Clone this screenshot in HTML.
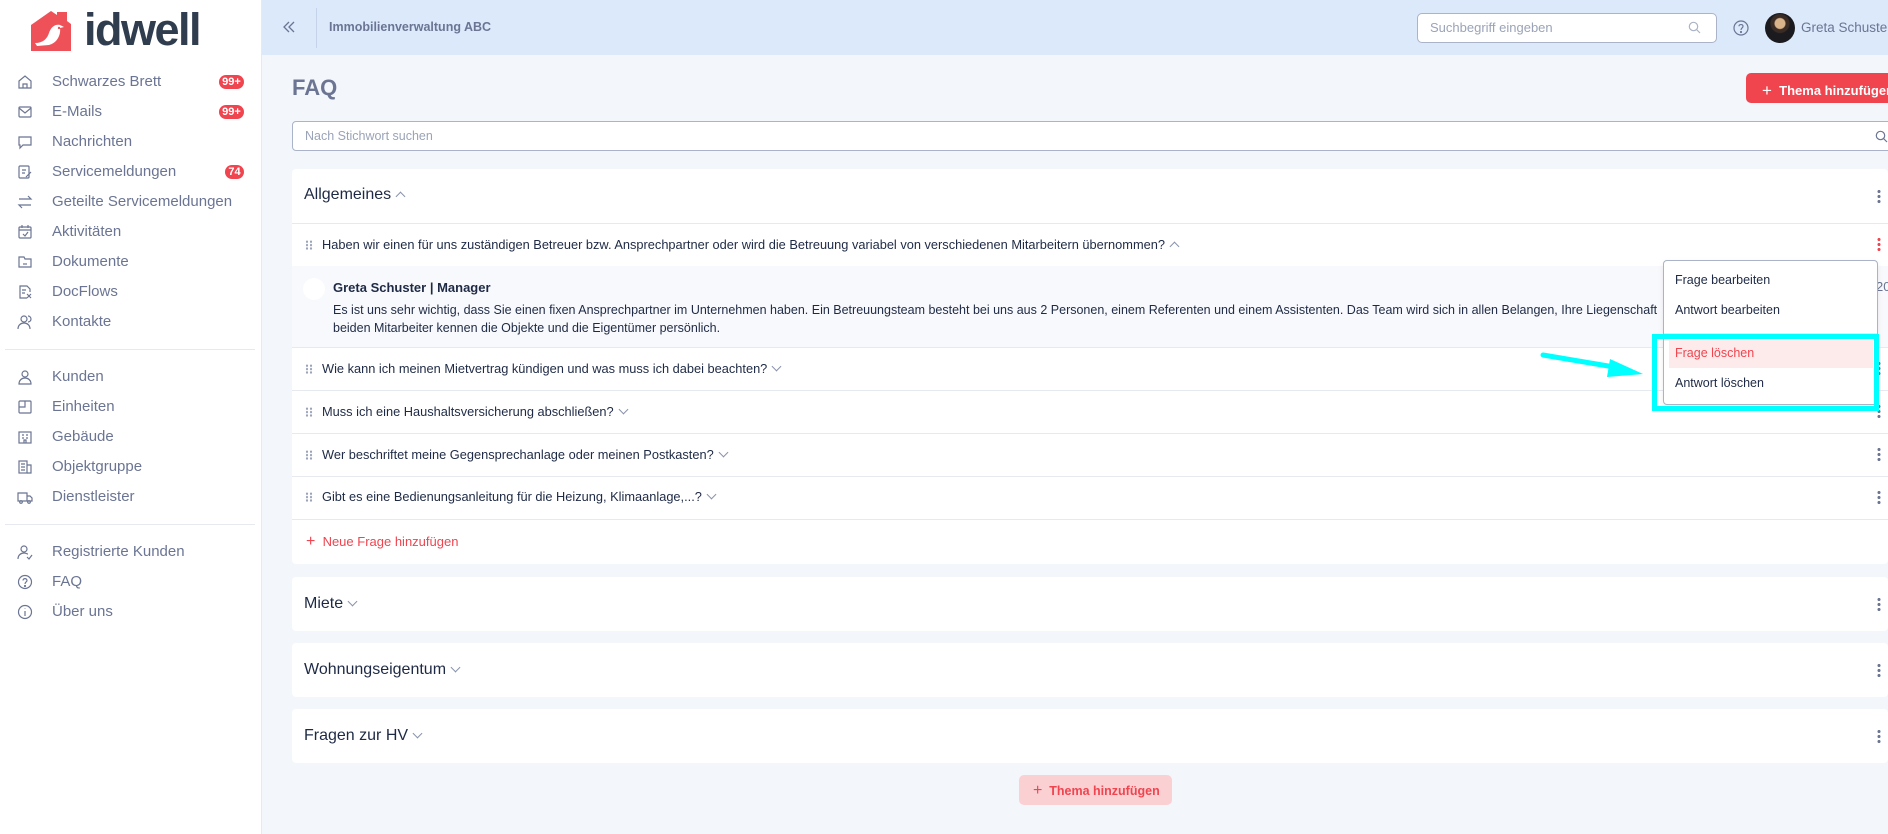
<!DOCTYPE html>
<html><head><meta charset="utf-8">
<style>
*{box-sizing:border-box;margin:0;padding:0}
body{width:1888px;height:834px;overflow:hidden;background:#f3f6fb;font-family:"Liberation Sans",sans-serif;position:relative;color:#1e2a45}
.abs{position:absolute}
#side{left:0;top:0;width:262px;height:834px;background:#fff;border-right:1px solid #e6e9f0}
.nav{position:absolute;left:52px;font-size:15px;color:#6b7593;white-space:nowrap}
.ic{position:absolute;left:17px;width:16px;height:16px}
.badge{position:absolute;background:#f0444f;color:#fff;font-size:11px;font-weight:bold;border-radius:8px;height:14px;line-height:14px;text-align:center}
#hdr{left:262px;top:0;width:1626px;height:55px;background:#dbe9fb}
.card{position:absolute;left:292px;width:1596px;background:#fff;border-radius:4px}
.q{position:absolute;left:322px;font-size:12.8px;color:#1e2a45;white-space:nowrap}
.grip{position:absolute;left:305px;width:8px;height:10px;background-image:radial-gradient(circle,#9aa3b8 1px,transparent 1.3px);background-size:4px 3.4px}
.hl{position:absolute;left:292px;width:1596px;height:1px;background:#e6e9f0}
.keb{position:absolute;left:1877px;width:4px;height:14px;background-image:radial-gradient(circle,#6b7593 1.4px,transparent 1.7px);background-size:4px 5px}
.th{position:absolute;left:304px;font-size:16px;color:#1e2a45}
.chev{display:inline-block;width:7px;height:7px;border-left:1px solid #8a93ab;border-bottom:1px solid #8a93ab;transform:rotate(-45deg);margin-left:6px;position:relative;top:-3px}
.chev.up{transform:rotate(135deg);top:1px}
</style></head><body>
<div id="side" class="abs">
<svg class="abs" style="left:29px;top:9px" width="44" height="44" viewBox="0 0 44 44"><path d="M2 16 L22 2 L28 6 L28 3 L38 3 L38 12 L42 15 L42 42 L2 42Z" fill="#ef5159"/><path d="M6 34 C14 34 18 30 20 24 C22 18 26 15 31 16 L35 18 L31 19 C32 26 28 34 20 36 L8 37Z" fill="#fff"/><circle cx="30" cy="19" r="1.2" fill="#ef5159"/></svg>
<div class="abs" style="left:84px;top:4px;font-size:45px;font-weight:bold;color:#2f3d4f;letter-spacing:-1.5px;line-height:52px">idwell</div>

<svg class="ic" style="top:74px" viewBox="0 0 16 16" fill="none" stroke="#6b7593" stroke-width="1.2"><path d="M2 7L8 2L14 7V14H2Z"/><path d="M6 14V10H10V14"/></svg>
<div class="nav" style="top:73px">Schwarzes Brett</div><div class="badge" style="left:219px;top:75px;width:25px">99+</div>
<svg class="ic" style="top:104px" viewBox="0 0 16 16" fill="none" stroke="#6b7593" stroke-width="1.2"><rect x="2" y="3" width="12" height="10" rx="1"/><path d="M2 4L8 9L14 4"/></svg>
<div class="nav" style="top:103px">E-Mails</div><div class="badge" style="left:219px;top:105px;width:25px">99+</div>
<svg class="ic" style="top:134px" viewBox="0 0 16 16" fill="none" stroke="#6b7593" stroke-width="1.2"><path d="M2 3H14V11H6L3 14V11H2Z"/></svg>
<div class="nav" style="top:133px">Nachrichten</div>
<svg class="ic" style="top:164px" viewBox="0 0 16 16" fill="none" stroke="#6b7593" stroke-width="1.2"><rect x="2" y="2" width="10" height="12" rx="1"/><path d="M5 6H9M5 9H8M9 13L14 8"/></svg>
<div class="nav" style="top:163px">Servicemeldungen</div><div class="badge" style="left:225px;top:165px;width:19px">74</div>
<svg class="ic" style="top:194px" viewBox="0 0 16 16" fill="none" stroke="#6b7593" stroke-width="1.2"><path d="M2 5H14L11 2M14 11H2L5 14"/></svg>
<div class="nav" style="top:193px">Geteilte Servicemeldungen</div>
<svg class="ic" style="top:224px" viewBox="0 0 16 16" fill="none" stroke="#6b7593" stroke-width="1.2"><rect x="2" y="3" width="12" height="11" rx="1"/><path d="M2 6H14M5 1V4M11 1V4M6 10L8 12L11 8"/></svg>
<div class="nav" style="top:223px">Aktivitäten</div>
<svg class="ic" style="top:254px" viewBox="0 0 16 16" fill="none" stroke="#6b7593" stroke-width="1.2"><path d="M2 3H7L8 5H14V13H2Z"/><path d="M6 10H10"/></svg>
<div class="nav" style="top:253px">Dokumente</div>
<svg class="ic" style="top:284px" viewBox="0 0 16 16" fill="none" stroke="#6b7593" stroke-width="1.2"><path d="M10 14H3V2H10L13 5V8"/><path d="M5 6H9M5 9H8M10 10L14 14M14 10L10 14"/></svg>
<div class="nav" style="top:283px">DocFlows</div>
<svg class="ic" style="top:314px" viewBox="0 0 16 16" fill="none" stroke="#6b7593" stroke-width="1.2"><circle cx="7" cy="5" r="3"/><path d="M1 15C1 11 4 9 7 9C10 9 13 11 13 15M11 2A3 3 0 0 1 11 8"/></svg>
<div class="nav" style="top:313px">Kontakte</div>
<div class="abs" style="left:5px;top:349px;width:250px;height:1px;background:#e6e9f0"></div>
<svg class="ic" style="top:369px" viewBox="0 0 16 16" fill="none" stroke="#6b7593" stroke-width="1.2"><circle cx="8" cy="5" r="3"/><path d="M2 15C2 11 5 9 8 9C11 9 14 11 14 15Z"/></svg>
<div class="nav" style="top:368px">Kunden</div>
<svg class="ic" style="top:399px" viewBox="0 0 16 16" fill="none" stroke="#6b7593" stroke-width="1.2"><rect x="2" y="2" width="12" height="12" rx="1"/><path d="M8 2V8H2"/></svg>
<div class="nav" style="top:398px">Einheiten</div>
<svg class="ic" style="top:429px" viewBox="0 0 16 16" fill="none" stroke="#6b7593" stroke-width="1.2"><rect x="2" y="3" width="12" height="11"/><path d="M5 6H7M9 6H11M5 9H7M9 9H11M7 14V11H9V14"/></svg>
<div class="nav" style="top:428px">Gebäude</div>
<svg class="ic" style="top:459px" viewBox="0 0 16 16" fill="none" stroke="#6b7593" stroke-width="1.2"><rect x="2" y="2" width="8" height="12"/><path d="M10 6H14V14H10M4 5H8M4 8H8M4 11H8"/></svg>
<div class="nav" style="top:458px">Objektgruppe</div>
<svg class="ic" style="top:489px" viewBox="0 0 16 16" fill="none" stroke="#6b7593" stroke-width="1.2"><path d="M1 4H10V12H1ZM10 7H13L15 9V12H10"/><circle cx="4" cy="13" r="1.3"/><circle cx="12" cy="13" r="1.3"/></svg>
<div class="nav" style="top:488px">Dienstleister</div>
<div class="abs" style="left:5px;top:524px;width:250px;height:1px;background:#e6e9f0"></div>
<svg class="ic" style="top:544px" viewBox="0 0 16 16" fill="none" stroke="#6b7593" stroke-width="1.2"><circle cx="7" cy="5" r="3"/><path d="M1 15C1 11 4 9 7 9C9 9 10 10 11 10M10 13L12 15L15 11"/></svg>
<div class="nav" style="top:543px">Registrierte Kunden</div>
<svg class="ic" style="top:574px" viewBox="0 0 16 16" fill="none" stroke="#6b7593" stroke-width="1.2"><circle cx="8" cy="8" r="6.5"/><path d="M6 6.5C6 4 10 4 10 6.5C10 8 8 8 8 10"/><circle cx="8" cy="12" r=".5"/></svg>
<div class="nav" style="top:573px">FAQ</div>
<svg class="ic" style="top:604px" viewBox="0 0 16 16" fill="none" stroke="#6b7593" stroke-width="1.2"><circle cx="8" cy="8" r="6.5"/><path d="M8 7V12M8 4.5V5"/></svg>
<div class="nav" style="top:603px">Über uns</div>
</div>

<div id="hdr" class="abs"></div>
<svg class="abs" style="left:282px;top:20px" width="14" height="14" viewBox="0 0 14 14" fill="none" stroke="#6b7593" stroke-width="1.3"><path d="M7 2L2 7L7 12M12 2L7 7L12 12"/></svg>
<div class="abs" style="left:316px;top:8px;width:1px;height:40px;background:#c5d3ea"></div>
<div class="abs" style="left:329px;top:20px;font-size:12.5px;color:#6b7593;font-weight:bold">Immobilienverwaltung ABC</div>
<div class="abs" style="left:1417px;top:13px;width:300px;height:30px;background:#fff;border:1px solid #aab3c8;border-radius:5px"></div>
<div class="abs" style="left:1430px;top:20px;font-size:13px;color:#9aa3b8">Suchbegriff eingeben</div>
<svg class="abs" style="left:1688px;top:21px" width="13" height="13" viewBox="0 0 13 13" fill="none" stroke="#aab3c8" stroke-width="1.2"><circle cx="5.5" cy="5.5" r="4.2"/><path d="M8.5 8.5L12 12"/></svg>
<svg class="abs" style="left:1733px;top:20px" width="16" height="16" viewBox="0 0 16 16" fill="none" stroke="#6b7593" stroke-width="1.2"><circle cx="8" cy="8" r="7"/><path d="M6 6.3C6 4 10 4 10 6.3C10 8 8 8 8 10"/><circle cx="8" cy="12" r=".5"/></svg>
<div class="abs" style="left:1765px;top:13px;width:30px;height:30px;border-radius:50%;background:radial-gradient(circle at 50% 35%,#d9b38a 0 5px,#3a2c25 6px 9px,#1b1b1f 10px)"></div>
<div class="abs" style="left:1801px;top:20px;font-size:13.5px;color:#6b7593;white-space:nowrap">Greta Schuster</div>

<div class="abs" style="left:292px;top:75px;font-size:22px;color:#6b7593;font-weight:bold">FAQ</div>
<div class="abs" style="left:1746px;top:73px;width:150px;height:30px;background:#f0444f;border-radius:5px"></div>
<div class="abs" style="left:1762px;top:80px;font-size:13px;color:#fff;font-weight:bold;white-space:nowrap"><span style="font-size:17px;font-weight:normal;position:relative;top:1px">+</span>&nbsp;&nbsp;Thema hinzufügen</div>
<div class="abs" style="left:292px;top:121px;width:1600px;height:30px;background:#fff;border:1px solid #aab3c8;border-radius:4px"></div>
<div class="abs" style="left:305px;top:129px;font-size:12.5px;color:#9aa3b8">Nach Stichwort suchen</div>
<svg class="abs" style="left:1875px;top:130px" width="13" height="13" viewBox="0 0 13 13" fill="none" stroke="#6b7593" stroke-width="1.2"><circle cx="5.5" cy="5.5" r="4.2"/><path d="M8.5 8.5L12 12"/></svg>

<div class="card" style="top:169px;height:395px"></div>
<div class="th" style="top:186px">Allgemeines<span class="chev up"></span></div>
<div class="keb" style="top:189px"></div>
<div class="hl" style="top:223px"></div>
<div class="grip" style="top:240px"></div>
<div class="q" style="top:237px">Haben wir einen für uns zuständigen Betreuer bzw. Ansprechpartner oder wird die Betreuung variabel von verschiedenen Mitarbeitern übernommen?<span class="chev up"></span></div>
<div class="keb" style="top:237px;background-image:radial-gradient(circle,#f0444f 1.4px,transparent 1.7px)"></div>
<div class="abs" style="left:292px;top:266px;width:1596px;height:81px;background:#f8f9fc"></div>
<div class="abs" style="left:303px;top:278px;width:22px;height:22px;border-radius:50%;background:#fff"></div>
<div class="abs" style="left:333px;top:280px;font-size:13px;font-weight:bold;color:#1e2a45">Greta Schuster | Manager</div>
<div class="abs" style="left:333px;top:301px;font-size:12.5px;color:#1e2a45;line-height:18px;white-space:nowrap">Es ist uns sehr wichtig, dass Sie einen fixen Ansprechpartner im Unternehmen haben. Ein Betreuungsteam besteht bei uns aus 2 Personen, einem Referenten und einem Assistenten. Das Team wird sich in allen Belangen, Ihre Liegenschaft<br>beiden Mitarbeiter kennen die Objekte und die Eigentümer persönlich.</div>
<div class="abs" style="left:1876px;top:279px;font-size:13px;color:#6b7593">20</div>
<div class="hl" style="top:347px"></div>
<div class="grip" style="top:364px"></div><div class="q" style="top:361px">Wie kann ich meinen Mietvertrag kündigen und was muss ich dabei beachten?<span class="chev"></span></div>
<div class="keb" style="top:361px"></div>
<div class="hl" style="top:390px"></div>
<div class="grip" style="top:407px"></div><div class="q" style="top:404px">Muss ich eine Haushaltsversicherung abschließen?<span class="chev"></span></div>
<div class="keb" style="top:404px"></div>
<div class="hl" style="top:433px"></div>
<div class="grip" style="top:450px"></div><div class="q" style="top:447px">Wer beschriftet meine Gegensprechanlage oder meinen Postkasten?<span class="chev"></span></div>
<div class="keb" style="top:447px"></div>
<div class="hl" style="top:476px"></div>
<div class="grip" style="top:492px"></div><div class="q" style="top:489px">Gibt es eine Bedienungsanleitung für die Heizung, Klimaanlage,...?<span class="chev"></span></div>
<div class="keb" style="top:490px"></div>
<div class="hl" style="top:519px"></div>
<div class="abs" style="left:306px;top:533px;font-size:13px;color:#f0444f;white-space:nowrap"><span style="font-size:16px">+</span>&nbsp;&nbsp;Neue Frage hinzufügen</div>

<div class="card" style="top:577px;height:54px"></div>
<div class="th" style="top:595px">Miete<span class="chev"></span></div><div class="keb" style="top:597px"></div>
<div class="card" style="top:643px;height:54px"></div>
<div class="th" style="top:661px">Wohnungseigentum<span class="chev"></span></div><div class="keb" style="top:663px"></div>
<div class="card" style="top:709px;height:54px"></div>
<div class="th" style="top:727px">Fragen zur HV<span class="chev"></span></div><div class="keb" style="top:729px"></div>

<div class="abs" style="left:1019px;top:775px;width:153px;height:30px;background:#fbd0d3;border-radius:5px"></div>
<div class="abs" style="left:1033px;top:782px;font-size:12.5px;color:#f0444f;font-weight:bold;white-space:nowrap"><span style="font-size:16px;font-weight:normal">+</span>&nbsp;&nbsp;Thema hinzufügen</div>

<div class="abs" style="left:1663px;top:260px;width:215px;height:145px;background:#fff;border:1px solid #aab3c8;border-radius:4px;box-shadow:0 2px 6px rgba(0,0,0,.08)"></div>
<div class="abs" style="left:1675px;top:273px;font-size:12.5px;color:#1e2a45">Frage bearbeiten</div>
<div class="abs" style="left:1675px;top:303px;font-size:12.5px;color:#1e2a45">Antwort bearbeiten</div>
<div class="abs" style="left:1664px;top:333px;width:213px;height:1px;background:#e6e9f0"></div>
<div class="abs" style="left:1669px;top:340px;width:204px;height:28px;background:#fdebec"></div>
<div class="abs" style="left:1675px;top:346px;font-size:12.5px;color:#f0444f">Frage löschen</div>
<div class="abs" style="left:1675px;top:376px;font-size:12.5px;color:#1e2a45">Antwort löschen</div>
<div class="abs" style="left:1652px;top:334px;width:227px;height:77px;border:5px solid #00ffff"></div>
<svg class="abs" style="left:1540px;top:350px" width="110" height="35" viewBox="0 0 110 35"><path d="M3 5L80 18" stroke="#00ffff" stroke-width="5" stroke-linecap="round"/><path d="M70 9L103 24L67 27Z" fill="#00ffff"/></svg>
</body></html>
